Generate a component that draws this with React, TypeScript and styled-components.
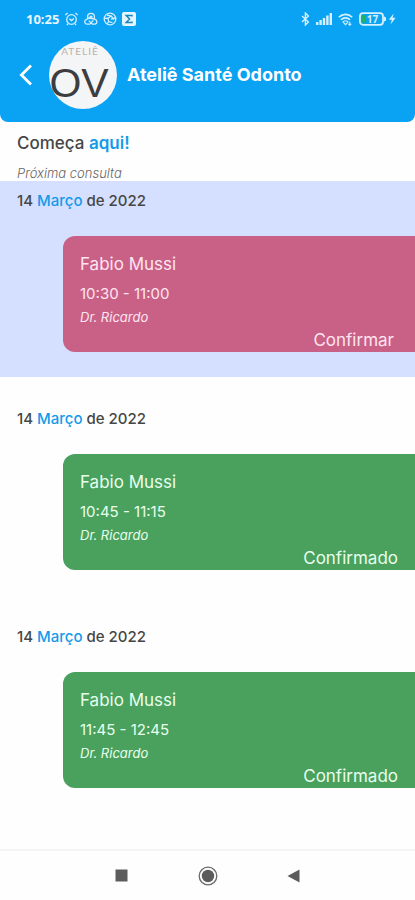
import React from "react";
import styled, { createGlobalStyle } from "styled-components";

const GlobalStyle = createGlobalStyle`
  *, *::before, *::after { box-sizing: border-box; }
  body { margin: 0; background: #fefefe; }
  button { font: inherit; color: inherit; background: none; border: 0; padding: 0; cursor: pointer; }
  h1, h2, p { margin: 0; font-weight: inherit; }
`;

const Screen = styled.div`
  min-height: 100vh;
  display: flex;
  flex-direction: column;
  font-family: Inter, sans-serif;
  color: #464646;
`;

const TopBar = styled.header`
  background: #0aa2f3;
  color: #fff;
  border-radius: 0 0 8px 8px;
  padding-bottom: 10px;
`;

const StatusBar = styled.div`
  display: flex;
  align-items: center;
  justify-content: space-between;
  height: 38px;
  padding: 0 18px 0 26px;
`;

const StatusGroup = styled.div<{ $gap: number }>`
  display: flex;
  align-items: center;
  gap: ${(p) => p.$gap}px;
  color: #d5f0ff;
`;

const Clock = styled.span`
  font: 700 13px/16px "Noto Sans", sans-serif;
  color: #e6f6ff;
`;

const TitleRow = styled.div`
  display: flex;
  align-items: center;
  height: 74px;
  padding: 0 16px;
`;

const BackButton = styled.button`
  display: flex;
  width: 33px;
  padding-left: 3px;
`;

const Logo = styled.svg`
  flex: none;
  width: 68px;
  height: 68px;
  margin-right: 10px;
`;

const Title = styled.h1`
  font-size: 18px;
  line-height: 24px;
  font-weight: 700;
`;

const Intro = styled.div`
  height: 59px;
  padding: 10px 17px 0;
`;

const Heading = styled.h2`
  font-size: 17px;
  line-height: 22px;
  font-weight: 500;
`;

const Accent = styled.span<{ $strong?: boolean }>`
  color: #139bea;
  font-weight: ${(p) => (p.$strong ? 600 : 500)};
`;

const Caption = styled.p`
  margin-top: 11px;
  font-size: 13px;
  line-height: 16px;
  font-style: italic;
  font-weight: 300;
  color: #666;
`;

const Agenda = styled.main`
  flex: 1;
  display: flex;
  flex-direction: column;
  gap: 22px;
`;

const Day = styled.section<{ $next?: boolean }>`
  padding: 10px 0 25px;
  background: ${(p) => (p.$next ? "#d5dfff" : "transparent")};
`;

const DateLine = styled.h2`
  padding: 0 17px;
  font-size: 15px;
  line-height: 20px;
  font-weight: 500;
`;

const Card = styled.article<{ $pending?: boolean }>`
  display: flex;
  flex-direction: column;
  height: 116px;
  margin: 25px 0 0 63px;
  padding: 17px 17px 2px;
  border-radius: 12px 0 0 12px;
  background: ${(p) => (p.$pending ? "#c96086" : "#4aa15e")};
  color: ${(p) => (p.$pending ? "#ffe5f0" : "#e7ffec")};
`;

const Patient = styled.p`
  font-size: 17px;
  line-height: 22px;
`;

const Time = styled.p`
  margin-top: 8px;
  font-size: 15px;
  line-height: 22px;
`;

const Doctor = styled.p`
  margin-top: 3px;
  font-size: 13px;
  line-height: 18px;
  font-style: italic;
`;

const Footer = styled.div<{ $inset?: boolean }>`
  margin-top: auto;
  padding-right: ${(p) => (p.$inset ? 4 : 0)}px;
  text-align: right;
  font-size: 17px;
  line-height: 20px;
`;

const NavBar = styled.nav`
  display: flex;
  justify-content: center;
  align-items: center;
  gap: 62px;
  height: 51px;
  border-top: 2px solid #f5f5f5;
`;

const NavButton = styled.button`
  display: flex;
  align-items: center;
  justify-content: center;
  width: 24px;
  height: 24px;
`;

const appointments = [
  { patient: "Fabio Mussi", time: "10:30 - 11:00", doctor: "Dr. Ricardo", pending: true },
  { patient: "Fabio Mussi", time: "10:45 - 11:15", doctor: "Dr. Ricardo", pending: false },
  { patient: "Fabio Mussi", time: "11:45 - 12:45", doctor: "Dr. Ricardo", pending: false },
];

function StatusLeft() {
  return (
    <StatusGroup $gap={5}>
      <Clock>10:25</Clock>
      <svg width="15" height="14" viewBox="0 0 14 14" fill="none" stroke="currentColor" strokeWidth="1.3">
        <circle cx="7" cy="7.5" r="4.8" />
        <path d="M.8 3 3.2 1M13.2 3 10.8 1M4.8 6.7 7 8.6l2.4-2M3.5 11.6l-1 1.6M10.5 11.6l1 1.6" />
      </svg>
      <svg width="14" height="14" viewBox="0 0 14 14" fill="none" stroke="currentColor" strokeWidth="1.3">
        <path d="M3.6 7V4.8a3.4 3.4 0 0 1 6.8 0V7M3.2 12.2a2.4 2.4 0 0 1-1-4.6L5 6l5.4 1.2a2.6 2.6 0 0 1 .8 5H8.4L4.8 8.6M3.2 12.2h2.6l3.6-3.8" />
        <circle cx="7" cy="5.2" r="1" />
      </svg>
      <svg width="14" height="14" viewBox="0 0 14 14" fill="none" stroke="currentColor" strokeWidth="1.3">
        <circle cx="7" cy="7" r="5.8" />
        <path d="M4 3.2 8.4 4l2.4 3.8M8.4 4 5 6.2l-3 .2M5 6.2l.8 3.6 3.6.8M5.8 9.8 4 11.6M8 7l4.4-1" />
      </svg>
      <svg width="14" height="14" viewBox="0 0 14 14">
        <rect width="14" height="14" rx="2" fill="#e6f6ff" />
        <path d="M10 4.6V3.4H4.2L7.6 7l-3.4 3.6H10V9.4" fill="none" stroke="#1686c4" strokeWidth="1.5" />
      </svg>
    </StatusGroup>
  );
}

function StatusRight() {
  return (
    <StatusGroup $gap={6}>
      <svg width="9" height="14" viewBox="0 0 9 14" fill="none" stroke="currentColor" strokeWidth="1.4">
        <path d="M1 4l6.4 6L4.4 13V1l3 3L1 10" />
      </svg>
      <svg width="16" height="12" viewBox="0 0 16 12" fill="currentColor">
        <path d="M0 9h2.4v3H0zM3.4 7h2.4v5H3.4zM6.8 5h2.4v7H6.8zM10.2 2.5h2.4V12h-2.4zM13.6 0H16v12h-2.4z" />
      </svg>
      <svg width="15" height="13" viewBox="0 0 15 13" fill="none" stroke="currentColor" strokeWidth="1.6">
        <path d="M.8 4.2a9.4 9.4 0 0 1 13.4 0M3 6.8a6.2 6.2 0 0 1 9 0" />
        <path d="M5 9a3.6 3.6 0 0 1 5 0l-2.5 2.6zM11.8 8.8v3.4M10.4 10.8l1.4 1.4 1.4-1.4" strokeWidth="1.1" />
      </svg>
      <svg width="38" height="14" viewBox="0 0 38 14">
        <rect x="1" y="1.2" width="23" height="11.6" rx="3" fill="none" stroke="#d5f0ff" strokeWidth="1.8" />
        <path d="M24.8 4.2 27 5.4v3.2l-2.2 1.2z" fill="#d5f0ff" />
        <path d="M3.2 3.2h3.2v7.6H3.2z" fill="#22b455" />
        <text x="13.5" y="10.6" textAnchor="middle" fontFamily="Noto Sans, sans-serif" fontSize="10" fontWeight="700" fill="#d5f0ff">17</text>
        <path d="M34.6 1.4 29.8 7.8h3L31.6 12.4l5-6.6h-3z" fill="#d5f0ff" />
      </svg>
    </StatusGroup>
  );
}

export default function App() {
  return (
    <Screen>
      <GlobalStyle />
      <TopBar>
        <StatusBar>
          <StatusLeft />
          <StatusRight />
        </StatusBar>
        <TitleRow>
          <BackButton aria-label="Voltar">
            <svg width="14" height="22" viewBox="0 0 14 22" fill="none" stroke="#fff" strokeWidth="2.8">
              <path d="M12 1.6 2.4 11 12 20.4" />
            </svg>
          </BackButton>
          <Logo viewBox="0 0 68 68">
            <circle cx="34" cy="34" r="34" fill="#f4f5f6" />
            <text x="31" y="14" textAnchor="middle" fontFamily="Lato, sans-serif" fontSize="10" letterSpacing="1" fill="#b9b3ad">ATELIÊ</text>
            <text x="30" y="56" textAnchor="middle" fontFamily="Liberation Sans, sans-serif" fontSize="41" fill="#3d3d3f">OV</text>
          </Logo>
          <Title>Ateliê Santé Odonto</Title>
        </TitleRow>
      </TopBar>

      <Intro>
        <Heading>
          Começa <Accent $strong>aqui!</Accent>
        </Heading>
        <Caption>Próxima consulta</Caption>
      </Intro>

      <Agenda>
        {appointments.map((a) => (
          <Day key={a.time} $next={a.pending}>
            <DateLine>
              14 <Accent>Março</Accent> de 2022
            </DateLine>
            <Card $pending={a.pending}>
              <Patient>{a.patient}</Patient>
              <Time>{a.time}</Time>
              <Doctor>{a.doctor}</Doctor>
              <Footer $inset={a.pending}>
                {a.pending ? <button type="button">Confirmar</button> : "Confirmado"}
              </Footer>
            </Card>
          </Day>
        ))}
      </Agenda>

      <NavBar>
        <NavButton aria-label="Recentes">
          <svg width="13" height="13" viewBox="0 0 13 13"><path d="M.5.5h12v12H.5z" fill="#5c5c5c" /></svg>
        </NavButton>
        <NavButton aria-label="Início">
          <svg width="20" height="20" viewBox="0 0 20 20">
            <circle cx="10" cy="10" r="8.8" fill="none" stroke="#6a6a6a" strokeWidth="1.3" />
            <circle cx="10" cy="10" r="6.2" fill="#5c5c5c" />
          </svg>
        </NavButton>
        <NavButton aria-label="Voltar à tela anterior">
          <svg width="13" height="14" viewBox="0 0 13 14"><path d="M12.5.5v13L.5 7z" fill="#5c5c5c" /></svg>
        </NavButton>
      </NavBar>
    </Screen>
  );
}
